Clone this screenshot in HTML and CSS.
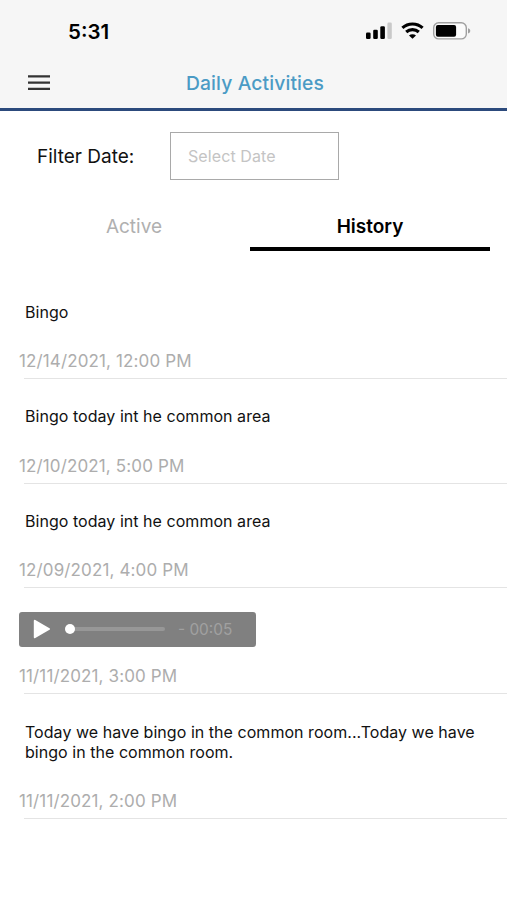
FILE: index.html
```html
<!DOCTYPE html>
<html lang="en">

<head>
    <meta charset="UTF-8">
    <meta name="viewport" content="width=device-width, initial-scale=1.0">
    <title>Daily Activities</title>
    <link rel="stylesheet" href="styles.css">
</head>

<body>
    <!-- header -->
    <header class="header">
        <div class="status">
            <span class="time">5:31</span>
            <div class="status_icons">
                <svg class="signal" width="26" height="17" viewBox="0 0 26 17">
                    <rect x="0" y="10.5" width="4.6" height="6.5" rx="1.3" />
                    <rect x="7.2" y="7.7" width="4.6" height="9.3" rx="1.3" />
                    <rect x="14.3" y="4.2" width="4.6" height="12.8" rx="1.3" />
                    <rect x="21.4" y="0.6" width="4.4" height="16.4" rx="1.3" fill="#c9c9c9" />
                </svg>
                <svg class="wifi" width="23" height="17" viewBox="0 0 23 17">
                    <path d="M1.4 5.9C7 .6 16 .6 21.6 5.9M5.2 10C8.8 6.8 14.2 6.8 17.8 10" fill="none" stroke="#000" stroke-width="3.1" />
                    <path d="M11.5 16.8L8 13.4C9.9 11.9 13.1 11.9 15 13.4Z" />
                </svg>
                <svg class="battery" width="38" height="18" viewBox="0 0 38 18">
                    <rect x=".7" y=".7" width="32.6" height="16.2" rx="5" fill="#fbfbfb" stroke="#a0a0a0" stroke-width="1.4" />
                    <rect x="2.9" y="2.9" width="20.2" height="11.8" rx="2" />
                    <path d="M35 6.2C38 7 38 10.6 35 11.4Z" fill="#a0a0a0" />
                </svg>
            </div>
        </div>
        <div class="nav">
            <svg class="menu" width="22" height="16" viewBox="0 0 22 16">
                <path d="M0 1.4H22M0 7.6H22M0 13.8H22" stroke="#333" stroke-width="2.3" />
            </svg>
            <h1 class="title">Daily Activities</h1>
        </div>
    </header>
    <!-- filter -->
    <div class="filter">
        <label for="date">Filter Date:</label>
        <input type="text" id="date" class="date_input" placeholder="Select Date">
    </div>
    <!-- tabs -->
    <ul class="tabs">
        <li>Active</li>
        <li class="current">History</li>
    </ul>
    <!-- history list -->
    <ul class="list">
        <li>
            <p class="text">Bingo</p>
            <p class="time_at">12/14/2021, 12:00 PM</p>
        </li>
        <li>
            <p class="text">Bingo today int he common area</p>
            <p class="time_at">12/10/2021, 5:00 PM</p>
        </li>
        <li>
            <p class="text">Bingo today int he common area</p>
            <p class="time_at">12/09/2021, 4:00 PM</p>
        </li>
        <li class="audio_item">
            <div class="player">
                <svg width="18" height="20" viewBox="0 0 18 20">
                    <path d="M1.8 1.8L16 10L1.8 18.2Z" fill="#fff" stroke="#fff" stroke-width="2" stroke-linejoin="round" />
                </svg>
                <div class="track"><i class="thumb"></i></div>
                <span class="left">- 00:05</span>
            </div>
            <p class="time_at">11/11/2021, 3:00 PM</p>
        </li>
        <li>
            <p class="text">Today we have bingo in the common room...Today we have bingo in the common room.</p>
            <p class="time_at">11/11/2021, 2:00 PM</p>
        </li>
    </ul>
</body>

</html>
```
FILE: styles.css
```css
* {
    margin: 0;
    padding: 0;
    box-sizing: border-box;
}

body {
    background-color: #fff;
    color: #111;
    font-family: Inter, "Liberation Sans", sans-serif;
}

li {
    list-style-type: none;
}

svg {
    display: block;
}
/* header */

.header {
    height: 111px;
    background-color: #f6f6f6;
    border-bottom: 3px solid #2c4a7c;
}

.status {
    display: flex;
    justify-content: space-between;
    height: 62px;
    padding: 0 36.5px 0 68px;
}

.time {
    padding-top: 19px;
    line-height: 26px;
    font-size: 20.5px;
    font-weight: 600;
    color: #000;
}

.status_icons {
    display: flex;
    align-items: flex-start;
    padding-top: 22px;
}

.wifi {
    margin: 0 8.5px 0 9px;
}

.nav {
    display: grid;
    grid-template-columns: 22px 1fr 22px;
    align-items: center;
    height: 42px;
    padding: 0 25px 0 28px;
}

.title {
    text-align: center;
    font-size: 19.3px;
    font-weight: 500;
    letter-spacing: .12px;
    color: #4b9bc5;
}
/* filter */

.filter {
    display: flex;
    align-items: center;
    padding: 21px 37px 0;
}

.filter label {
    width: 133px;
    font-size: 19px;
}

.date_input {
    width: 169px;
    height: 48px;
    padding: 0 17px;
    border: 1px solid #a9a9a9;
    background-color: #fff;
    font-family: inherit;
    font-size: 16px;
    letter-spacing: .1px;
}

.date_input::placeholder {
    color: #c4c4c4;
}
/* tabs */

.tabs {
    display: flex;
    padding: 20px 17px 0 18px;
}

.tabs li {
    flex: 1;
    height: 51px;
    line-height: 53px;
    text-align: center;
    font-size: 19px;
    color: #b0b0b0;
}

.tabs .current {
    flex: 0 0 240px;
    border-bottom: 4px solid #000;
    font-weight: 600;
    color: #000;
}
/* list */

.list {
    padding: 23.3px 0 0 24px;
}

.list li {
    padding-top: 27.3px;
    border-bottom: 1px solid #e4e4e4;
}

.text {
    padding: 0 24px 0 1px;
    line-height: 20px;
    font-size: 16px;
    letter-spacing: .04px;
}

.time_at {
    margin: 29.4px 0 6px -5px;
    line-height: 21px;
    font-size: 17px;
    letter-spacing: .13px;
    color: #adadad;
}

.list .audio_item {
    padding-top: 23.6px;
}

.player {
    display: flex;
    align-items: center;
    width: 237px;
    height: 35px;
    margin-left: -5px;
    padding-left: 14px;
    border-radius: 3px;
    background-color: #808080;
}

.track {
    width: 100px;
    height: 4px;
    margin: 0 13px 0 14px;
    border-radius: 2px;
    background-color: #979797;
}

.thumb {
    display: block;
    width: 10px;
    height: 10px;
    margin-top: -3px;
    border-radius: 50%;
    background-color: #fff;
}

.left {
    font-size: 15.4px;
    color: #a0a0a0;
}

.audio_item .time_at {
    margin-top: 19.5px;
}
```
